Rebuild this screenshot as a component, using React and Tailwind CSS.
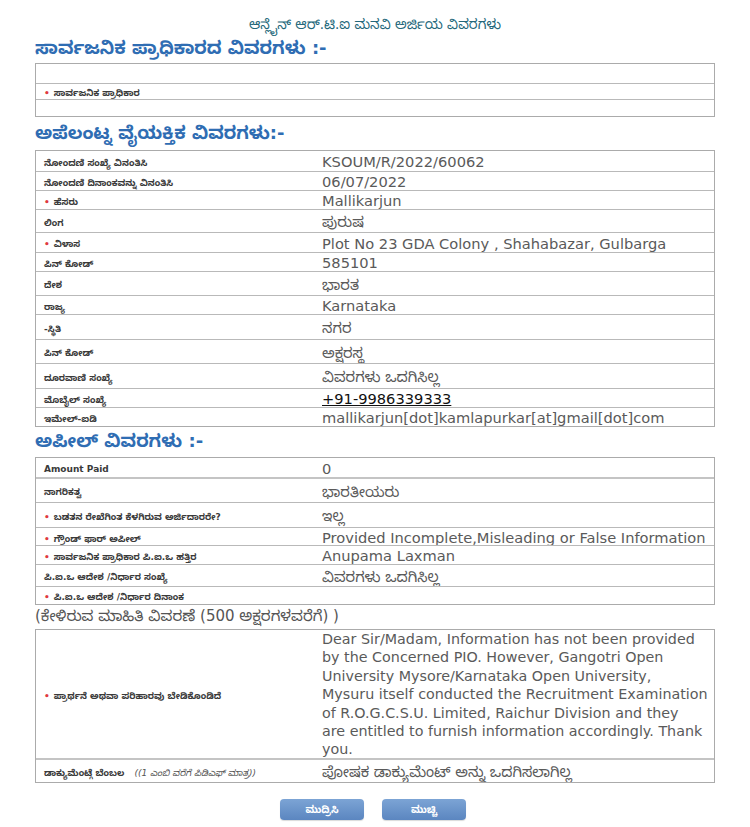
const kn = "font-['DejaVu_Sans','Noto_Sans_Kannada','Noto_Sans',sans-serif]"

const applicantRows = [
  { label: 'ನೋಂದಣಿ ಸಂಖ್ಯೆ ವಿನಂತಿಸಿ', value: 'KSOUM/R/2022/60062', h: 'h-[20px]' },
  { label: 'ನೋಂದಣಿ ದಿನಾಂಕವನ್ನು ವಿನಂತಿಸಿ', value: '06/07/2022', h: 'h-[19px]' },
  { label: 'ಹೆಸರು', req: true, value: 'Mallikarjun', h: 'h-[19px]' },
  { label: 'ಲಿಂಗ', value: 'ಪುರುಷ', h: 'h-[23px]' },
  { label: 'ವಿಳಾಸ', req: true, value: 'Plot No 23 GDA Colony , Shahabazar, Gulbarga', h: 'h-[20px]' },
  { label: 'ಪಿನ್ ಕೋಡ್', value: '585101', h: 'h-[19px]' },
  { label: 'ದೇಶ', value: 'ಭಾರತ', h: 'h-[24px]' },
  { label: 'ರಾಜ್ಯ', value: 'Karnataka', h: 'h-[19px]' },
  { label: '-ಸ್ಥಿತಿ', value: 'ನಗರ', h: 'h-[25px]' },
  { label: 'ಪಿನ್ ಕೋಡ್', value: 'ಅಕ್ಷರಸ್ಥ', h: 'h-[24px]' },
  { label: 'ದೂರವಾಣಿ ಸಂಖ್ಯೆ', value: 'ವಿವರಗಳು ಒದಗಿಸಿಲ್ಲ', h: 'h-[25px]' },
  { label: 'ಮೊಬೈಲ್ ಸಂಖ್ಯೆ', value: '+91-9986339333', link: true, h: 'h-[19px]' },
  { label: 'ಇಮೇಲ್-ಐಡಿ', value: 'mallikarjun[dot]kamlapurkar[at]gmail[dot]com', h: 'h-[19px]' },
]

const appealRows = [
  { label: 'Amount Paid', value: '0', h: 'h-[19px]' },
  { label: 'ನಾಗರಿಕತ್ವ', value: 'ಭಾರತೀಯರು', h: 'h-[25px]' },
  { label: 'ಬಡತನ ರೇಖೆಗಿಂತ ಕೆಳಗಿರುವ ಅರ್ಜಿದಾರರೇ?', req: true, value: 'ಇಲ್ಲ', h: 'h-[25px]' },
  { label: 'ಗ್ರೌಂಡ್ ಫಾರ್ ಅಪೀಲ್', req: true, value: 'Provided Incomplete,Misleading or False Information', h: 'h-[18px]' },
  { label: 'ಸಾರ್ವಜನಿಕ ಪ್ರಾಧಿಕಾರ ಪಿ.ಐ.ಒ ಹತ್ತಿರ', req: true, value: 'Anupama Laxman', h: 'h-[19px]' },
  { label: 'ಪಿ.ಐ.ಒ ಆದೇಶ /ನಿರ್ಧಾರ ಸಂಖ್ಯೆ', value: 'ವಿವರಗಳು ಒದಗಿಸಿಲ್ಲ', h: 'h-[22px]' },
  { label: 'ಪಿ.ಐ.ಒ ಆದೇಶ /ನಿರ್ಧಾರ ದಿನಾಂಕ', req: true, value: '', h: 'h-[18px]' },
]

const requestLines = [
  'Dear Sir/Madam, Information has not been provided',
  'by the Concerned PIO. However, Gangotri Open',
  'University Mysore/Karnataka Open University,',
  'Mysuru itself conducted the Recruitment Examination',
  'of R.O.G.C.S.U. Limited, Raichur Division and they',
  'are entitled to furnish information accordingly. Thank',
  'you.',
]

function Label({ text, req }) {
  return (
    <span className={`text-[9px] leading-[12px] font-bold text-[#3a3a3a] ${kn}`}>
      {req && <span className="text-[#e0393e] mr-[4px]">•</span>}
      {text}
    </span>
  )
}

function Row({ label, req, value, link, h, first, thick }) {
  return (
    <div
      className={`grid grid-cols-[283px_1fr] items-center overflow-hidden ${h} ${
        first ? '' : thick ? 'border-t-2 border-[#c4c4c4]' : 'border-t border-[#b9b9b9]'
      }`}
    >
      <div className="pl-[8px] leading-[12px]">{label && <Label text={label} req={req} />}</div>
      <div className={`pl-[3px] pt-[1px] text-[14.65px] leading-[17px] whitespace-nowrap ${kn}`}>
        {link ? (
          <a href="#" className="text-[#111] underline">{value}</a>
        ) : (
          <span className="text-[#5a5a5a]">{value}</span>
        )}
      </div>
    </div>
  )
}

function Heading({ children, className = '' }) {
  return (
    <h2 className={`text-[18px] font-bold text-[#2f6db3] overflow-hidden ${kn} ${className}`}>{children}</h2>
  )
}

export default function App() {
  return (
    <div className="w-[750px] h-[827px] bg-white px-[35px] overflow-hidden">
      <div className={`h-[36px] pt-[14px] text-center text-[13.5px] leading-[20px] text-[#23677a] ${kn}`}>
        ಆನ್ಲೈನ್ ಆರ್.ಟಿ.ಐ ಮನವಿ ಅರ್ಜಿಯ ವಿವರಗಳು
      </div>
      <Heading className="h-[27px] leading-[24px]">ಸಾರ್ವಜನಿಕ ಪ್ರಾಧಿಕಾರದ ವಿವರಗಳು :-</Heading>

      <div className="border border-[#ababab]">
        <Row first h="h-[19px]" />
        <Row label="ಸಾರ್ವಜನಿಕ ಪ್ರಾಧಿಕಾರ" req h="h-[16px]" />
        <Row h="h-[17px]" />
      </div>

      <Heading className="h-[33px] leading-[32px]">ಅಪೆಲಂಟ್ನ ವೈಯಕ್ತಿಕ ವಿವರಗಳು:-</Heading>

      <div className="border border-[#ababab]">
        {applicantRows.map((r, i) => (
          <Row key={i} {...r} first={i === 0} />
        ))}
      </div>

      <Heading className="h-[30px] leading-[28px]">ಅಪೀಲ್ ವಿವರಗಳು :-</Heading>

      <div className="border border-[#ababab]">
        {appealRows.map((r, i) => (
          <Row key={i} {...r} first={i === 0} thick={i === 1} />
        ))}
      </div>

      <p className={`h-[24px] text-[15px] leading-[22px] text-[#555] ${kn}`}>
        (ಕೇಳಿರುವ ಮಾಹಿತಿ ವಿವರಣೆ (500 ಅಕ್ಷರಗಳವರೆಗೆ) )
      </p>

      <div className="border border-[#ababab]">
        <div className="grid grid-cols-[283px_1fr] items-center h-[128px] overflow-hidden">
          <div className="pl-[8px] leading-[12px]">
            <Label text="ಪ್ರಾರ್ಥನೆ ಅಥವಾ ಪರಿಹಾರವು ಬೇಡಿಕೊಂಡಿದೆ" req />
          </div>
          <div className={`pl-[3px] text-[14.3px] leading-[18.4px] text-[#5a5a5a] ${kn}`}>
            {requestLines.map((line, i) => (
              <span key={i} className="block whitespace-nowrap">{line}</span>
            ))}
          </div>
        </div>
        <div className="grid grid-cols-[283px_1fr] items-center h-[24px] overflow-hidden border-t-2 border-[#c4c4c4]">
          <div className="pl-[8px] leading-[12px]">
            <Label text="ಡಾಕ್ಯುಮೆಂಟ್ಗೆ ಬೆಂಬಲ" />
            <span className={`ml-[10px] text-[9px] italic text-[#555] ${kn}`}>
              ((1 ಎಂಬಿ ವರೆಗೆ ಪಿಡಿಎಫ್ ಮಾತ್ರ))
            </span>
          </div>
          <div className={`pl-[3px] text-[14.65px] leading-[17px] text-[#5a5a5a] whitespace-nowrap ${kn}`}>
            ಪೋಷಕ ಡಾಕ್ಯುಮೆಂಟ್ ಅನ್ನು ಒದಗಿಸಲಾಗಿಲ್ಲ
          </div>
        </div>
      </div>

      <div className="flex justify-center gap-[18px] mt-[16px] pr-[4px]">
        {['ಮುದ್ರಿಸಿ', 'ಮುಚ್ಚಿ'].map((t) => (
          <button
            key={t}
            className={`w-[84px] h-[21px] rounded-[4px] bg-gradient-to-b from-[#7ca4d5] to-[#5b86c0] text-white text-[10px] leading-[12px] font-bold shadow-[0_1px_1px_rgba(0,0,0,0.15)] ${kn}`}
          >
            {t}
          </button>
        ))}
      </div>
    </div>
  )
}
